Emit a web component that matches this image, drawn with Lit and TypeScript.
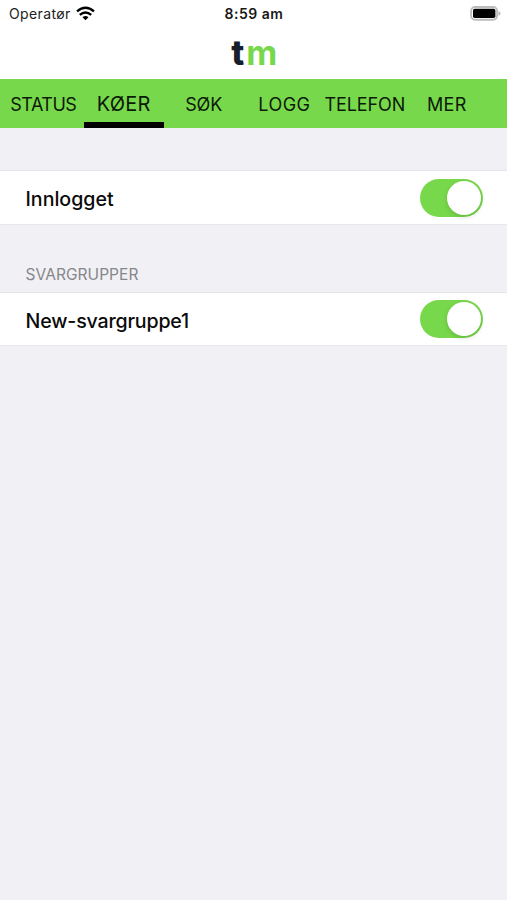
import { LitElement, html, css } from "lit";
import { customElement, property } from "lit/decorators.js";

@customElement("ios-switch")
class IosSwitch extends LitElement {
  static styles = css`
    :host { display: block; }
    .track { display: flex; justify-content: flex-end; box-sizing: border-box; width: 63px; height: 38px; padding: 2px; border-radius: 19px; background: #78d84b; }
    .thumb { width: 34px; height: 34px; border-radius: 50%; background: #fff; box-shadow: 0 2px 5px rgba(0, 0, 0, 0.15); }
  `;
  render() {
    return html`<div class="track"><div class="thumb"></div></div>`;
  }
}

@customElement("switch-row")
class SwitchRow extends LitElement {
  @property() label = "";
  static styles = css`
    :host { display: flex; align-items: center; justify-content: space-between; box-sizing: border-box; padding: 0 24px 0 25.5px; background: #fff; border-top: 1px solid #e4e4e8; border-bottom: 1px solid #e8e8ec; }
    .label { font-size: 19.6px; line-height: 24px; font-weight: 450; color: #0a0a0a; padding-top: 3px; }
  `;
  render() {
    return html`<span class="label">${this.label}</span><ios-switch></ios-switch>`;
  }
}

@customElement("app-root")
class AppRoot extends LitElement {
  static styles = css`
    :host { display: block; height: 900px; background: #f0f0f5; font-family: Inter, sans-serif; overflow: hidden; }
    .top { height: 79px; background: #fff; }
    .status { display: grid; grid-template-columns: 1fr auto 1fr; align-items: center; height: 27px; padding: 0 6px 0 9px; }
    .carrier { display: flex; align-items: center; gap: 5.5px; font-size: 14px; letter-spacing: 0.38px; color: #222; }
    .time { font-size: 14px; font-weight: 600; letter-spacing: 0.5px; color: #181818; margin-right: 2px; }
    .battery { justify-self: end; display: block; }
    .wifi { display: block; margin-top: -1px; }
    .logo { display: flex; justify-content: center; gap: 2px; height: 52px; padding-left: 1.5px; line-height: 52px; font-size: 34px; font-weight: 800; color: #17202a; }
    .m { font-weight: 700; color: #78d84b; }
    .tabs { display: grid; grid-template-columns: repeat(6, 80.6px); height: 49px; padding-left: 3px; background: #78d84b; }
    .tab { display: flex; align-items: center; justify-content: center; box-sizing: border-box; border-bottom: 6px solid transparent; padding: 7px 1.6px 0 0; font-size: 18px; letter-spacing: -0.12px; color: #0c1a08; }
    .status-tab { padding-right: 0; letter-spacing: -0.5px; }
    .logg-tab { padding-right: 1.4px; letter-spacing: 0.5px; }
    .mer-tab { padding-right: 0; padding-left: 1px; letter-spacing: 0.3px; }
    .active { padding-right: 0.4px; font-size: 20px; letter-spacing: 0.2px; border-bottom-color: #000; }
    .first { height: 55px; margin-top: 42px; }
    .second { height: 54px; letter-spacing: -0.17px; }
    .heading { height: 67px; box-sizing: border-box; padding: 40px 0 0 25.5px; font-size: 15.5px; line-height: 20px; letter-spacing: 0.05px; color: #86868b; }
  `;
  render() {
    const tabs = [
      ["STATUS", "status-tab"],
      ["KØER", "active"],
      ["SØK", ""],
      ["LOGG", "logg-tab"],
      ["TELEFON", ""],
      ["MER", "mer-tab"],
    ];
    return html`
      <div class="top">
        <div class="status">
          <div class="carrier"><span>Operatør</span>
            <svg class="wifi" width="19" height="15" viewBox="0 0 19 15" fill="none" stroke="#000" stroke-width="2.4">
              <path d="M1 5.4Q9.5-1.7 18 5.4" /><path d="M3.8 8.8Q9.5 4 15.2 8.8" /><path d="M6.5 11.2Q9.5 8.6 12.5 11.2L9.5 14.2Z" fill="#000" stroke="none" />
            </svg>
          </div>
          <div class="time">8:59 am</div>
          <svg class="battery" width="31" height="15" viewBox="0 0 31 15">
            <rect x="1.1" y="1" width="26" height="12.8" rx="4" fill="#fff" stroke="#bcbcbc" stroke-width="1.9" />
            <rect x="3" y="2.8" width="22.4" height="9.2" rx="1.8" fill="#000" />
            <path d="M28.5 5.2Q30.5 5.8 30.5 7.5T28.5 9.8Z" fill="#b5b5b5" />
          </svg>
        </div>
        <div class="logo"><span>t</span><span class="m">m</span></div>
      </div>
      <nav class="tabs">${tabs.map(([t, c]) => html`<span class="tab ${c}">${t}</span>`)}</nav>
      <switch-row class="first" label="Innlogget"></switch-row>
      <div class="heading">SVARGRUPPER</div>
      <switch-row class="second" label="New-svargruppe1"></switch-row>
    `;
  }
}
